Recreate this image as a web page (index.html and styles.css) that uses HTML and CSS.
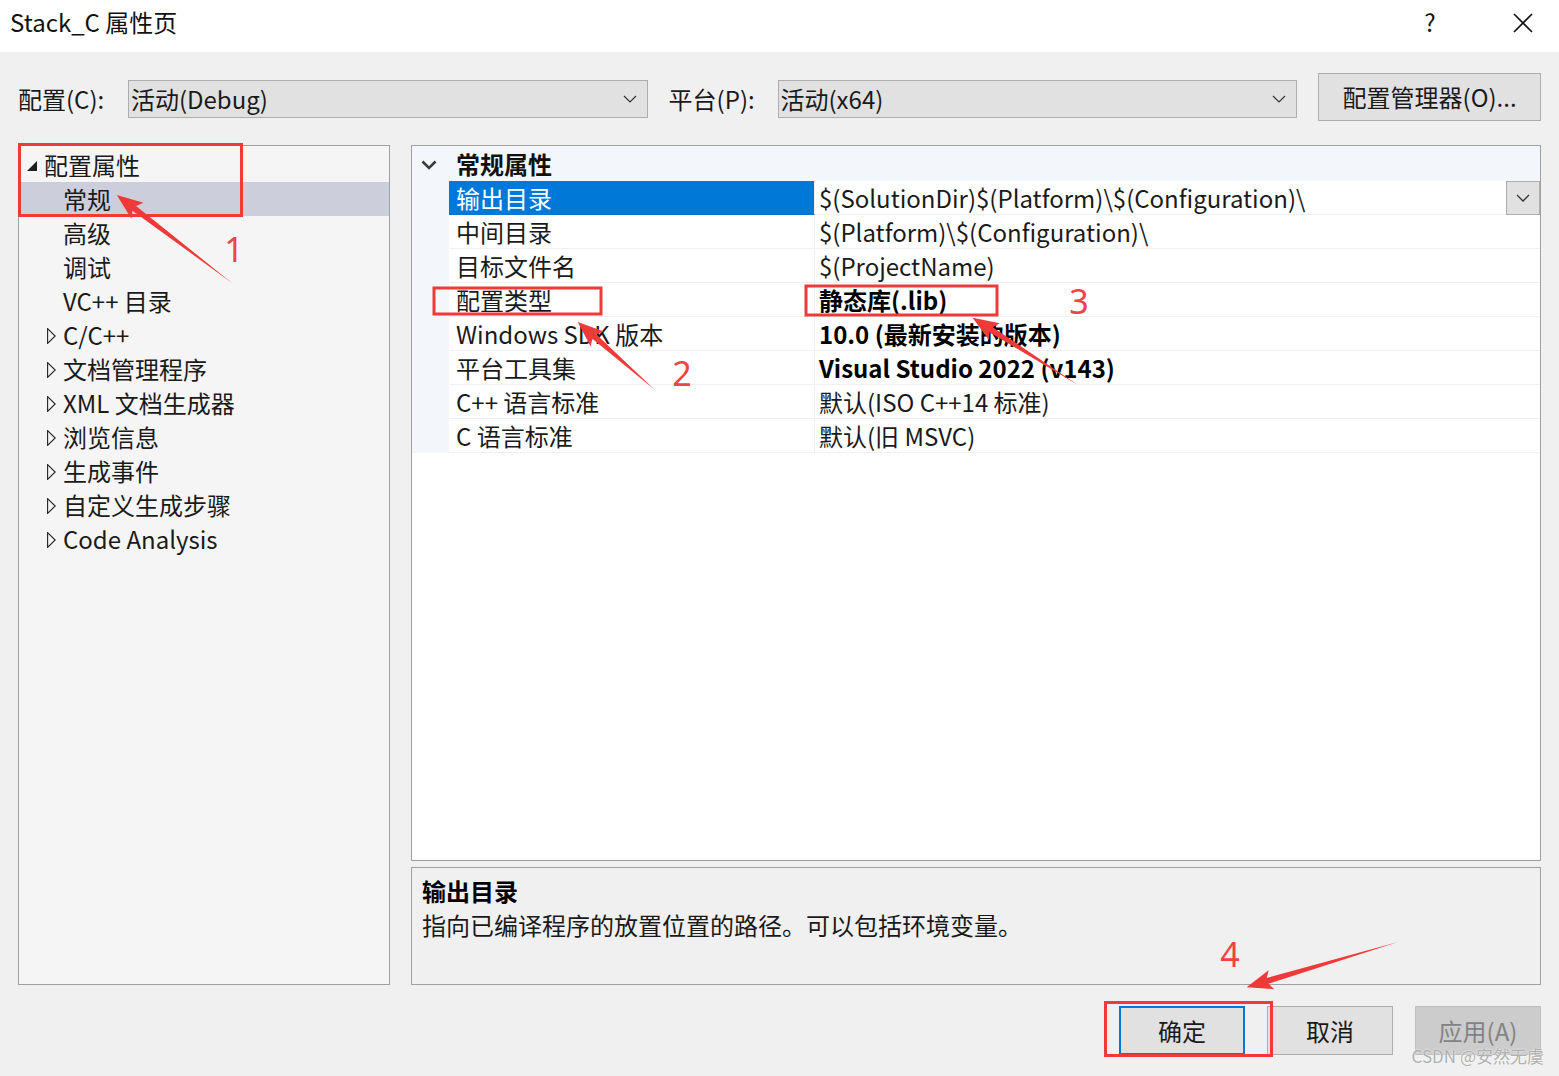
FILE: index.html
```html
<!DOCTYPE html>
<html lang="zh-CN">
<head>
    <meta charset="UTF-8">
    <title>Stack_C 属性页</title>
    <link rel="stylesheet" href="styles.css">
</head>
<body>
<div class="window">

    <div class="titlebar">
        <span class="title">Stack_C 属性页</span>
        <span class="help">?</span>
        <svg class="close" width="20" height="20" viewBox="0 0 20 20">
            <path d="M1 1 L19 19 M19 1 L1 19" stroke="#111" stroke-width="1.6" fill="none"/>
        </svg>
    </div>

    <div class="toolbar">
        <label class="tb-label">配置(C):</label>
        <div class="combo">
            <span>活动(Debug)</span>
            <svg class="chev" width="14" height="8" viewBox="0 0 14 8"><path d="M1 1 L7 7 L13 1" stroke="#333" stroke-width="1.2" fill="none"/></svg>
        </div>
        <label class="tb-label tb-label-2">平台(P):</label>
        <div class="combo">
            <span>活动(x64)</span>
            <svg class="chev" width="14" height="8" viewBox="0 0 14 8"><path d="M1 1 L7 7 L13 1" stroke="#333" stroke-width="1.2" fill="none"/></svg>
        </div>
        <button class="btn btn-manager">配置管理器(O)...</button>
    </div>

    <div class="main">
        <div class="tree">
            <div class="tree-row open">
                <svg class="twisty" width="10" height="10" viewBox="0 0 10 10"><polygon points="10,0 10,10 0,10" fill="#1e1e1e"/></svg>
                <span>配置属性</span>
            </div>
            <div class="tree-row leaf selected"><span>常规</span></div>
            <div class="tree-row leaf"><span>高级</span></div>
            <div class="tree-row leaf"><span>调试</span></div>
            <div class="tree-row leaf"><span>VC++ 目录</span></div>
            <div class="tree-row closed">
                <svg class="twisty" width="9" height="16" viewBox="0 0 9 16"><polygon points="0.6,0.6 8.2,8 0.6,15.4" fill="none" stroke="#222" stroke-width="1.1"/></svg>
                <span>C/C++</span>
            </div>
            <div class="tree-row closed">
                <svg class="twisty" width="9" height="16" viewBox="0 0 9 16"><polygon points="0.6,0.6 8.2,8 0.6,15.4" fill="none" stroke="#222" stroke-width="1.1"/></svg>
                <span>文档管理程序</span>
            </div>
            <div class="tree-row closed">
                <svg class="twisty" width="9" height="16" viewBox="0 0 9 16"><polygon points="0.6,0.6 8.2,8 0.6,15.4" fill="none" stroke="#222" stroke-width="1.1"/></svg>
                <span>XML 文档生成器</span>
            </div>
            <div class="tree-row closed">
                <svg class="twisty" width="9" height="16" viewBox="0 0 9 16"><polygon points="0.6,0.6 8.2,8 0.6,15.4" fill="none" stroke="#222" stroke-width="1.1"/></svg>
                <span>浏览信息</span>
            </div>
            <div class="tree-row closed">
                <svg class="twisty" width="9" height="16" viewBox="0 0 9 16"><polygon points="0.6,0.6 8.2,8 0.6,15.4" fill="none" stroke="#222" stroke-width="1.1"/></svg>
                <span>生成事件</span>
            </div>
            <div class="tree-row closed">
                <svg class="twisty" width="9" height="16" viewBox="0 0 9 16"><polygon points="0.6,0.6 8.2,8 0.6,15.4" fill="none" stroke="#222" stroke-width="1.1"/></svg>
                <span>自定义生成步骤</span>
            </div>
            <div class="tree-row closed">
                <svg class="twisty" width="9" height="16" viewBox="0 0 9 16"><polygon points="0.6,0.6 8.2,8 0.6,15.4" fill="none" stroke="#222" stroke-width="1.1"/></svg>
                <span>Code Analysis</span>
            </div>
        </div>

        <div class="right">
            <div class="grid">
                <div class="cat-row">
                    <div class="gutter">
                        <svg width="16" height="10" viewBox="0 0 16 10"><path d="M1.5 1.5 L8 8 L14.5 1.5" stroke="#3c3c3c" stroke-width="2.6" fill="none"/></svg>
                    </div>
                    <div class="cat-name">常规属性</div>
                </div>
                <div class="prop-row">
                    <div class="gutter"></div>
                    <div class="p-name active">输出目录</div>
                    <div class="p-value">
                        <span>$(SolutionDir)$(Platform)\$(Configuration)\</span>
                        <div class="drop-btn">
                            <svg width="14" height="8" viewBox="0 0 14 8"><path d="M1 1 L7 7 L13 1" stroke="#333" stroke-width="1.3" fill="none"/></svg>
                        </div>
                    </div>
                </div>
                <div class="prop-row">
                    <div class="gutter"></div>
                    <div class="p-name">中间目录</div>
                    <div class="p-value"><span>$(Platform)\$(Configuration)\</span></div>
                </div>
                <div class="prop-row">
                    <div class="gutter"></div>
                    <div class="p-name">目标文件名</div>
                    <div class="p-value"><span>$(ProjectName)</span></div>
                </div>
                <div class="prop-row">
                    <div class="gutter"></div>
                    <div class="p-name">配置类型</div>
                    <div class="p-value bold"><span>静态库(.lib)</span></div>
                </div>
                <div class="prop-row">
                    <div class="gutter"></div>
                    <div class="p-name">Windows SDK 版本</div>
                    <div class="p-value bold"><span>10.0 (最新安装的版本)</span></div>
                </div>
                <div class="prop-row">
                    <div class="gutter"></div>
                    <div class="p-name">平台工具集</div>
                    <div class="p-value bold"><span>Visual Studio 2022 (v143)</span></div>
                </div>
                <div class="prop-row">
                    <div class="gutter"></div>
                    <div class="p-name">C++ 语言标准</div>
                    <div class="p-value"><span>默认(ISO C++14 标准)</span></div>
                </div>
                <div class="prop-row">
                    <div class="gutter"></div>
                    <div class="p-name">C 语言标准</div>
                    <div class="p-value"><span>默认(旧 MSVC)</span></div>
                </div>
            </div>

            <div class="desc">
                <div class="desc-title">输出目录</div>
                <div class="desc-text">指向已编译程序的放置位置的路径。可以包括环境变量。</div>
            </div>
        </div>
    </div>

    <div class="footer">
        <button class="btn btn-ok">确定</button>
        <button class="btn">取消</button>
        <button class="btn btn-disabled">应用(A)</button>
    </div>

    <!-- 标注 -->
    <svg class="annotations" width="1559" height="1076" viewBox="0 0 1559 1076">
        <g fill="none" stroke="#ef3a3a" stroke-width="3">
            <rect x="19.5" y="144.5" width="222" height="71"/>
            <rect x="434" y="288" width="167" height="26"/>
            <rect x="806" y="286" width="191" height="29"/>
            <rect x="1105.5" y="1002.5" width="166" height="53"/>
        </g>
        <g fill="#ef3a3a">
            <g transform="translate(232,283) rotate(217.4)"><polygon points="0,0 123,-3 119,-10 145,0 119,10 123,3"/></g>
            <g transform="translate(655,390) rotate(221.4)"><polygon points="0,0 81,-3 77,-10 103,0 77,10 81,3"/></g>
            <g transform="translate(1078,385) rotate(212.5)"><polygon points="0,0 103,-3 99,-10 125,0 99,10 103,3"/></g>
            <g transform="translate(1398,942) rotate(163.4)"><polygon points="0,0 136,-3 132,-10 158,0 132,10 136,3"/></g>
        </g>
        <g class="anno-num" fill="#ef4444">
            <text x="234" y="262" text-anchor="middle">1</text>
            <text x="682" y="386" text-anchor="middle">2</text>
            <text x="1079" y="314" text-anchor="middle">3</text>
            <text x="1230" y="967" text-anchor="middle">4</text>
        </g>
    </svg>

    <div class="watermark">CSDN @安然无虞</div>
</div>
</body>
</html>
```

FILE: styles.css
```css
* {
    box-sizing: border-box;
}

body {
    margin: 0;
    padding: 0;
    background-color: #f0f0f0;
    font-family: "Noto Sans CJK SC", "Noto Sans", sans-serif;
    font-size: 24px;
    color: #1a1a1a;
}

.window {
    position: relative;
    width: 1559px;
    height: 1076px;
    overflow: hidden;
}

/* 标题栏 */
.titlebar {
    height: 52px;
    background: #fff;
    display: flex;
    align-items: flex-start;
    padding: 5px 0 0 10px;
    line-height: 34px;
}

.title {
    flex: 1;
    color: #111;
}

.help {
    width: 20px;
    margin-right: 73px;
    text-align: center;
    color: #111;
}

.close {
    margin: 8px 26px 0 0;
}

/* 配置 / 平台 */
.toolbar {
    display: flex;
    align-items: flex-start;
    padding: 21px 18px 0 18px;
    height: 69px;
}

.tb-label {
    width: 110px;
    line-height: 38px;
    margin-top: 7px;
}

.tb-label-2 {
    margin-left: 21px;
    width: 109px;
}

.combo {
    width: 520px;
    height: 38px;
    margin-top: 7px;
    background: #e1e1e1;
    border: 1px solid #adadad;
    display: flex;
    align-items: center;
    justify-content: space-between;
    padding: 0 10px 0 2px;
    line-height: 36px;
}

.btn {
    font-family: inherit;
    font-size: 24px;
    color: #1a1a1a;
    background: #e1e1e1;
    border: 1px solid #adadad;
    height: 49px;
    width: 126px;
    padding: 0;
    line-height: 46px;
}

.btn-manager {
    margin-left: 21px;
    width: 223px;
    height: 48px;
}

/* 主区域 */
.main {
    display: flex;
    gap: 21px;
    margin-top: 24px;
    padding: 0 18px;
    height: 840px;
}

.tree {
    width: 372px;
    background: #f5f5f5;
    border: 1px solid #a0a0a0;
    padding-top: 2px;
}

.tree-row {
    height: 34px;
    line-height: 34px;
    display: flex;
    align-items: center;
    white-space: nowrap;
}

.tree-row.open {
    padding-left: 8px;
}

.tree-row.open .twisty {
    margin: 2px 7px 0 0;
}

.tree-row.closed {
    padding-left: 28px;
}

.tree-row.closed .twisty {
    margin: 2px 7px 0 0;
}

.tree-row.leaf {
    padding-left: 44px;
}

.tree-row.selected {
    background: #cccedb;
}

.right {
    flex: 1;
    display: flex;
    flex-direction: column;
    gap: 6px;
}

/* 属性表 */
.grid {
    height: 716px;
    background: #fff;
    border: 1px solid #a0a0a0;
}

.cat-row {
    display: flex;
    height: 35px;
    background: #f3f6fb;
    line-height: 35px;
}

.gutter {
    width: 37px;
    flex: none;
    background: #f3f6fb;
    display: flex;
    align-items: center;
    justify-content: center;
}

.cat-row .gutter svg {
    margin: 2px 4px 0 0;
}

.cat-name {
    font-weight: bold;
    padding-left: 7px;
    color: #111;
}

.prop-row {
    display: flex;
    height: 34px;
    line-height: 33px;
}

.p-name {
    width: 366px;
    flex: none;
    padding-left: 7px;
    border-bottom: 1px solid #eef0f3;
    border-right: 1px solid #eef0f3;
    white-space: nowrap;
}

.p-name.active {
    background: #0078d7;
    color: #fff;
    border-bottom-color: #0078d7;
}

.p-value {
    flex: 1;
    display: flex;
    justify-content: space-between;
    padding-left: 4px;
    border-bottom: 1px solid #eef0f3;
    white-space: nowrap;
}

.p-value.bold {
    font-weight: bold;
    color: #000;
}

.drop-btn {
    width: 34px;
    height: 34px;
    background: #e1e1e1;
    border: 1px solid #adadad;
    display: flex;
    align-items: center;
    justify-content: center;
}

/* 说明 */
.desc {
    height: 118px;
    border: 1px solid #a0a0a0;
    padding: 6px 10px;
    line-height: 34px;
}

.desc-title {
    font-weight: bold;
    color: #000;
}

/* 底部按钮 */
.footer {
    display: flex;
    justify-content: flex-end;
    gap: 22px;
    padding: 21px 18px 0 0;
}

.btn-ok {
    border: 2px solid #0078d7;
}

.btn-disabled {
    background: #cccccc;
    border-color: #bfbfbf;
    color: #838383;
}

/* 标注层 */
.annotations {
    position: absolute;
    left: 0;
    top: 0;
    pointer-events: none;
}

.anno-num {
    font-family: "Noto Sans", sans-serif;
    font-size: 34px;
}

.watermark {
    position: absolute;
    right: 15px;
    bottom: 8px;
    font-size: 17px;
    color: #b0b0b0;
    text-shadow: 0 0 2px #fff;
}
```
